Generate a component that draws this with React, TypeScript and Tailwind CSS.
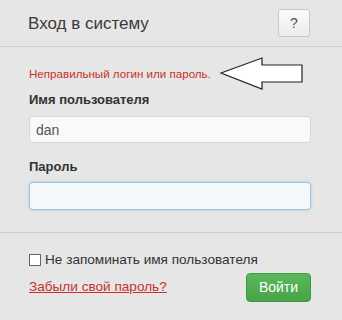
import React from 'react';

const Arrow = () => (
  <svg
    className="absolute left-[218px] top-[56px]"
    width="88"
    height="36"
    viewBox="0 0 88 36"
  >
    <path
      d="M3 17 L44 2 L44 9 L84 9 L84 26 L44 26 L44 33 Z"
      fill="#ffffff"
      stroke="#222222"
      strokeWidth="1.2"
      strokeLinejoin="miter"
    />
  </svg>
);

export default function App() {
  return (
    <div
      className="relative w-[342px] h-[320px] overflow-hidden bg-[#e6e6e6]"
      style={{ fontFamily: '"Liberation Sans", Arial, sans-serif' }}
    >
      <div className="h-[47px] flex items-center justify-between pl-[28px] pr-[32px] border-b border-[#cdcdcd]">
        <h1 className="text-[17px] text-[#3a3a3a] leading-none pt-[1px]">Вход в систему</h1>
        <button className="w-[32px] h-[28px] rounded-[3px] border border-[#c8c8c8] bg-gradient-to-b from-[#fbfbfb] to-[#ececec] text-[#555] text-[14px] flex items-center justify-center">
          ?
        </button>
      </div>

      <div className="pl-[29px] pr-[31px] pt-[19px] pb-[22px] border-b border-[#cdcdcd]">
        <p className="text-[11.6px] leading-[16px] text-[#c9302c]">Неправильный логин или пароль.</p>
        <label className="block mt-[10px] text-[13px] leading-[16px] font-bold text-[#333]">
          Имя пользователя
        </label>
        <input
          defaultValue="dan"
          className="mt-[8px] block w-full h-[27px] px-[6px] rounded-[4px] border border-[#d6d6d6] bg-[#f9f9f9] text-[14px] text-[#555] outline-none"
        />
        <label className="block mt-[16px] text-[13px] leading-[16px] font-bold text-[#333]">
          Пароль
        </label>
        <input
          type="password"
          className="mt-[7px] block w-full h-[28px] px-[6px] rounded-[4px] border border-[#9cc3dd] bg-[#f5f9fc] shadow-[0_0_3px_rgba(102,175,233,0.45)] outline-none"
        />
      </div>

      <div className="pl-[29px] pr-[31px] pt-[18px]">
        <label className="flex items-center gap-[4px] h-[18px] text-[13.6px] text-[#333]">
          <span className="w-[12px] h-[12px] border border-[#666] bg-white" />
          Не запоминать имя пользователя
        </label>
        <div className="mt-[4px] flex items-center justify-between">
          <a href="#" className="text-[13.6px] text-[#c9302c] underline">
            Забыли свой пароль?
          </a>
          <button className="w-[65px] h-[29px] rounded-[4px] border border-[#3e9a3e] bg-gradient-to-b from-[#5cb85c] to-[#46a346] text-white text-[14px]">
            Войти
          </button>
        </div>
      </div>

      <Arrow />
    </div>
  );
}
